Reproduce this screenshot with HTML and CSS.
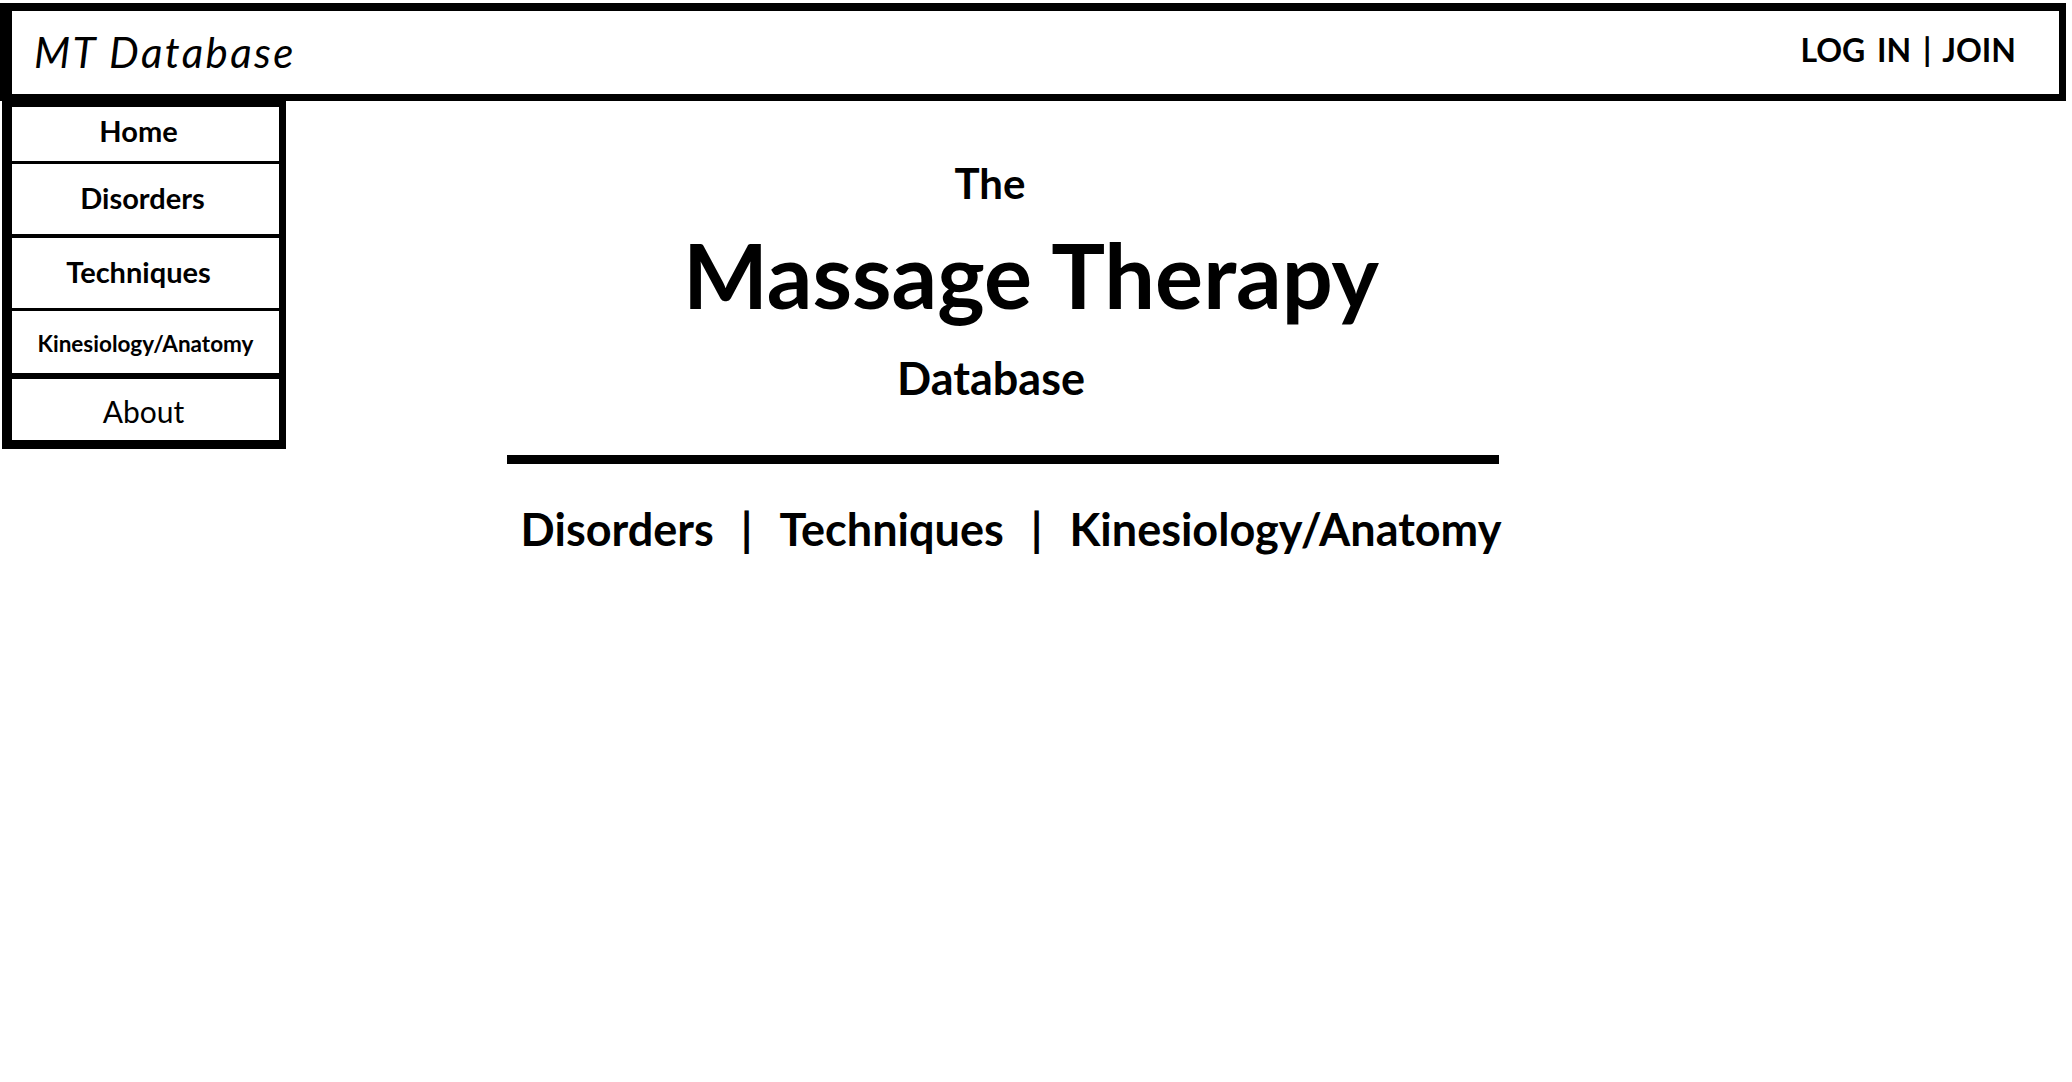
FILE: index.html
```html
<!DOCTYPE html>
<html>
<head>
<meta charset="utf-8">
<title>MT Database</title>
<link rel="stylesheet" href="styles.css">
</head>
<body>
<header class="topbar">
  <div class="brand">MT Database</div>
  <div class="auth">LOG IN | JOIN</div>
</header>
<div class="layout">
  <nav class="sidebar">
    <a class="side-item home" href="#">Home</a>
    <a class="side-item disorders" href="#">Disorders</a>
    <a class="side-item techniques" href="#">Techniques</a>
    <a class="side-item kines" href="#">Kinesiology/Anatomy</a>
    <a class="side-item about" href="#">About</a>
  </nav>
  <main class="hero">
    <div class="hero-the">The</div>
    <h1 class="hero-title">Massage Therapy</h1>
    <div class="hero-db">Database</div>
    <div class="hero-rule"></div>
    <div class="hero-links">
      <span>Disorders</span><span class="sep">|</span><span>Techniques</span><span class="sep">|</span><span>Kinesiology/Anatomy</span>
    </div>
  </main>
</div>
</body>
</html>
```
FILE: styles.css
```css
html, body {
  margin: 0;
  padding: 0;
  background: #ffffff;
}
body {
  font-family: Lato, "Open Sans", "Liberation Sans", sans-serif;
  color: #000;
}
* { box-sizing: border-box; }

.topbar {
  margin-top: 3px;
  width: 2066px;
  height: 98px;
  border-style: solid;
  border-color: #000;
  border-width: 8px 7px 7px 12px;
  display: flex;
  justify-content: space-between;
  align-items: flex-start;
}
.brand {
  font-style: italic;
  font-weight: 400;
  font-size: 42px;
  letter-spacing: 2.4px;
  line-height: 1.2;
  padding-left: 22px;
  padding-top: 16px;
}
.auth {
  font-weight: 700;
  font-size: 32px;
  word-spacing: 4px;
  line-height: 1.2;
  padding-right: 43px;
  padding-top: 20px;
}

.layout {
  display: flex;
  align-items: flex-start;
}

.sidebar {
  margin-left: 2px;
  width: 284px;
  display: flex;
  flex-direction: column;
  border-style: solid;
  border-color: #000;
  border-width: 6px 7px 0 10px;
}
.side-item {
  display: flex;
  align-items: center;
  justify-content: center;
  color: #000;
  text-decoration: none;
  font-weight: 700;
  font-size: 29px;
  line-height: 1.2;
  border-bottom: 3px solid #000;
}
.home { height: 57px; padding: 0 14px 6px 0; }
.disorders { height: 74px; border-bottom-width: 4px; padding: 0 6px 2px 0; }
.techniques { height: 73px; padding: 0 14px 2px 0; }
.kines { height: 68px; border-bottom-width: 6px; font-size: 22.5px; padding: 2px 0 0 0; }
.about { height: 70px; border-bottom-width: 9px; font-weight: 400; font-size: 30px; padding: 2px 4px 0 0; }

.hero {
  margin-left: 221px;
  width: 992px;
  margin-top: 57px;
  display: flex;
  flex-direction: column;
  align-items: stretch;
  text-align: center;
}
.hero-the {
  font-weight: 700;
  font-size: 42px;
  line-height: 1.2;
  padding-right: 26px;
}
.hero-title {
  margin: 12px 0 0 0;
  font-weight: 700;
  font-size: 90px;
  line-height: 1.2;
  padding-left: 56px;
}
.hero-db {
  margin-top: 23px;
  font-weight: 700;
  font-size: 45px;
  line-height: 1.2;
  padding-right: 24px;
}
.hero-rule {
  margin-top: 50px;
  height: 9px;
  background: #000;
}
.hero-links {
  margin-top: 38px;
  display: flex;
  justify-content: center;
  gap: 27px;
  font-weight: 700;
  font-size: 45px;
  line-height: 1.2;
  padding-left: 16px;
}
```
